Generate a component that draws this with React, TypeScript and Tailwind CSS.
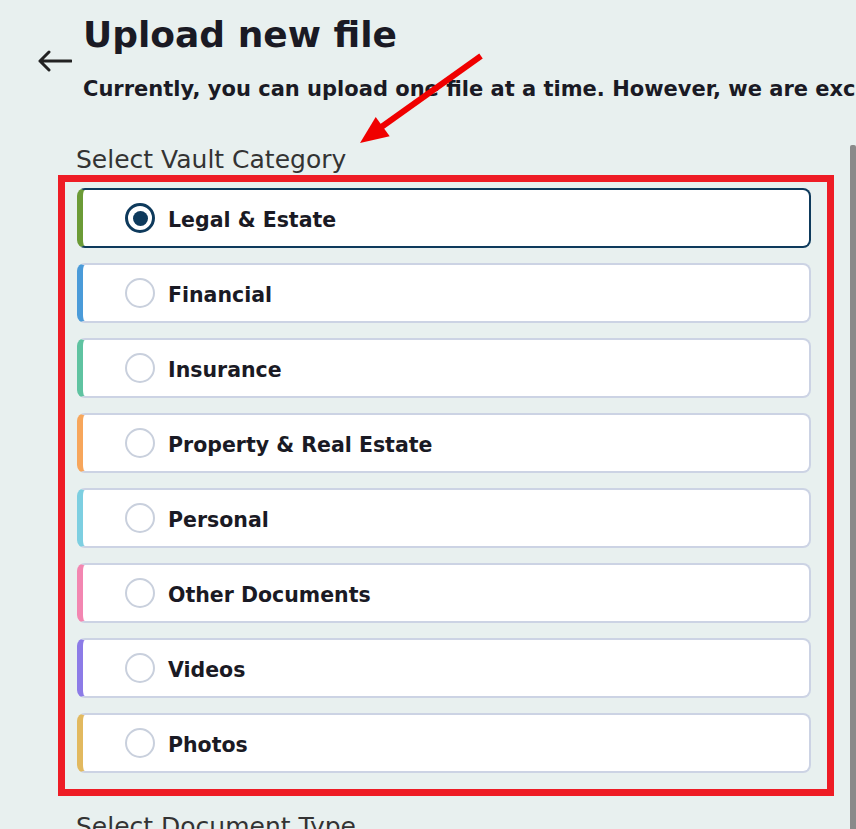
import React from "react";

const items = [
  { label: "Legal & Estate", color: "border-l-[#6b9b36]", selected: true },
  { label: "Financial", color: "border-l-[#4a9bd9]" },
  { label: "Insurance", color: "border-l-[#5fc3a1]" },
  { label: "Property & Real Estate", color: "border-l-[#f7a65b]" },
  { label: "Personal", color: "border-l-[#7dcfe1]" },
  { label: "Other Documents", color: "border-l-[#f386b1]" },
  { label: "Videos", color: "border-l-[#8c7be7]" },
  { label: "Photos", color: "border-l-[#e2b95f]" },
];

function Radio({ selected }: { selected?: boolean }) {
  if (selected) {
    return (
      <div className="w-[30px] h-[30px] rounded-full border-[3px] border-[#0e3a5c] flex items-center justify-center shrink-0">
        <div className="w-[15px] h-[15px] rounded-full bg-[#0e3a5c]" />
      </div>
    );
  }
  return <div className="w-[30px] h-[30px] rounded-full border-[2.5px] border-[#c9d0dd] shrink-0" />;
}

export default function App() {
  return (
    <div
      className="relative w-[856px] h-[829px] overflow-hidden bg-[#e8f0ef] text-[#1a1a24]"
      style={{ fontFamily: '"DejaVu Sans", sans-serif' }}
    >
      {/* Header */}
      <div className="flex pl-[38px] pt-[13px]">
        <div className="w-[45px] shrink-0 pt-[37px]">
          <svg width="34" height="22" viewBox="0 0 34 22" fill="none">
            <path d="M33 11H2M11 2L2 11L11 20" stroke="#222" strokeWidth="3" strokeLinecap="round" strokeLinejoin="round" />
          </svg>
        </div>
        <div className="flex flex-col min-w-0">
          <h1 className="text-[36px] leading-[44px] font-bold whitespace-nowrap">Upload new file</h1>
          <p className="mt-[19px] text-[21px] leading-[26px] font-bold whitespace-nowrap">
            Currently, you can upload one file at a time. However, we are excited to let you know that multiple uploads are coming soon.
          </p>
        </div>
      </div>

      {/* Scroll area */}
      <div className="flex mt-[43px] h-[700px]">
        <div className="w-[850px] shrink-0 pl-[58px]">
          <div className="pl-[18px] text-[25px] leading-[30px] text-[#333]">Select Vault Category</div>
          <div className="w-[776px] border-[7px] border-[#ee1c25] pt-[6px] pl-[12px] pr-[16px] pb-[16px] flex flex-col gap-[15px]">
            {items.map((it) => (
              <div
                key={it.label}
                className={`h-[60px] flex items-center bg-white rounded-[8px] border-2 border-l-[6px] pl-[42px] ${
                  it.selected ? "border-[#0e3a5c]" : "border-[#ccd3e4]"
                } ${it.color}`}
              >
                <Radio selected={it.selected} />
                <span className="ml-[13px] pt-[4px] text-[20.5px] font-bold text-[#1a1a24]">{it.label}</span>
              </div>
            ))}
          </div>
          <div className="mt-[16px] pl-[18px] text-[25px] leading-[30px] text-[#333]">Select Document Type</div>
        </div>
        <div className="w-[6px] bg-[#8a8a8a] rounded-t-[2px]" />
      </div>

      {/* Annotation arrow */}
      <svg className="absolute left-0 top-0 pointer-events-none" width="856" height="829">
        <line x1="481" y1="56" x2="380" y2="128" stroke="#f00000" strokeWidth="6" />
        <polygon points="360,143 375.7,116.9 389.7,136.3" fill="#f00000" />
      </svg>
    </div>
  );
}
